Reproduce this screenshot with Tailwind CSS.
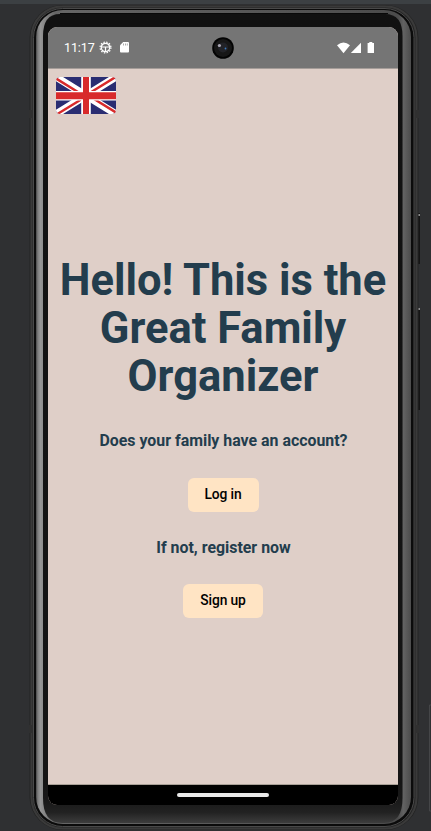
<!DOCTYPE html>
<html lang="en">
<head>
<meta charset="utf-8">
<title>Great Family Organizer</title>
<script src="https://cdn.jsdelivr.net/npm/@tailwindcss/browser@4"></script>
</head>
<body class="relative h-[831px] w-[431px] overflow-hidden bg-[#2f3032] font-['Roboto',sans-serif]">
  <!-- Device frame -->
  <svg class="absolute inset-0" width="431" height="831" viewBox="0 0 431 831" fill="none" aria-hidden="true">
    <defs>
      <linearGradient id="bezel" x1="0" y1="0" x2="0" y2="1"><stop offset="0" stop-color="#111"/><stop offset=".95" stop-color="#151515"/><stop offset=".972" stop-color="#191919"/><stop offset=".987" stop-color="#222"/><stop offset="1" stop-color="#3d3d3d"/></linearGradient>
      <linearGradient id="rim" x1="0" y1="0" x2="1" y2="0"><stop offset="0" stop-color="#484848"/><stop offset=".005" stop-color="#7d7d7d"/><stop offset=".012" stop-color="#969696"/><stop offset=".018" stop-color="#8d8d8d"/><stop offset=".05" stop-color="#666"/><stop offset=".965" stop-color="#4b4b4b"/><stop offset=".98" stop-color="#626262"/><stop offset="1" stop-color="#4c4c4c"/></linearGradient>
    </defs>
    <path d="M0 0H431V4H0z" fill="#3c4043"/>
    <path d="M431 705H429.5V811H431" stroke="#454648"/>
    <path d="M417 213h3v51h-3zM417 308h3v102h-3z" fill="#141414"/>
    <path d="M418 214h2v2h-2zM418 308h2v2h-2z" fill="#8a8a8a"/>
    <rect x="29.500" y="5" width="389" height="825" rx="33" fill="#242424"/>
    <rect x="31.500" y="6.500" width="385" height="822" rx="31" stroke="#3a3a3a" stroke-width="2"/>
    <rect x="33.500" y="8.500" width="380.500" height="818" rx="29" fill="#0b0b0b" stroke="#494949"/>
    <rect x="36" y="10" width="375" height="814" rx="27" fill="url(#rim)"/>
    <path d="M60 13.500H388" stroke="#090909"/>
    <path d="M43 36Q43 14 60 14H385Q402.500 14 402.500 36V798Q402.500 823 384 823H62Q43 823 43 798z" fill="url(#bezel)"/>
    <path d="M29 110h3v8h-3M29 725h3v8h-3M415 110h4v8h-4M415 725h4v8h-4" fill="#303030"/>
  </svg>

  <div class="relative ml-12 pt-[27px]">
    <div class="flex h-[778px] w-[350px] flex-col overflow-hidden rounded-[9px] bg-[#dfcfc8]">
      <header class="relative flex h-[42px] shrink-0 items-center border-b border-[#a59d99] bg-[#757575] px-4 text-white">
        <span class="w-[32px] pt-px text-[12.500px] leading-none tracking-[-0.1px] whitespace-nowrap">11:17</span>
        <svg class="ml-[3px]" width="13" height="13" viewBox="0 0 13 13" fill="none" stroke="#fff"><circle cx="6.500" cy="6.500" r="5.400" stroke-width="1.300" stroke-dasharray="1.500 1.330"/><circle cx="6.500" cy="6.500" r="4.200" stroke-width="1.200"/><path d="M2.500 6H10.500M6.500 6V11" stroke-width="1.200"/></svg>
        <svg class="ml-[8px]" width="9" height="11" viewBox="0 0 9 11"><path d="M3.200 0H8Q9 0 9 1V9.500Q9 10.500 8 10.500H1Q0 10.500 0 9.500V3.200z" fill="#fff"/><path d="M3.500 1.500v2M5.500 1.500v2M7.300 1.500v2" stroke="#757575" stroke-width=".6"/></svg>
        <svg class="absolute left-[164px] top-[10px]" width="22" height="22" viewBox="0 0 22 22"><circle cx="11" cy="11" r="10.800" fill="#030303"/><circle cx="11" cy="11" r="9" fill="#171717"/><circle cx="11" cy="10.500" r="5" fill="#222328"/><circle cx="7.400" cy="8.500" r="1.600" fill="#aaa7b5"/><circle cx="13.500" cy="11.500" r=".9" fill="#3978bc"/></svg>
        <svg class="mr-[7px] ml-auto" width="38" height="12" viewBox="0 0 38 12" fill="#fff"><path d="M0 3.200Q6.500-2.200 13 3.200L6.500 11.200z"/><path d="M24 .8V11H13.800z"/><path d="M32.300 0h3v1H37v10h-6.400V1h1.700z"/></svg>
      </header>

      <main class="flex grow flex-col items-center text-[#233d4d]">
        <svg class="mt-2 ml-2 self-start overflow-hidden rounded-[4px]" width="60" height="37" viewBox="0 0 60 37" aria-label="English">
          <clipPath id="flag"><rect width="60" height="37" rx="3.500"/></clipPath>
          <g clip-path="url(#flag)">
            <path d="M0 0H60V37H0z" fill="#2a2d72"/>
            <path d="M0 0L60 37M60 0L0 37" stroke="#fff" stroke-width="7.400"/>
            <path d="M-1 .9L30 20M61-.9L30 18.200M61 36.100L30 17M-1 38.500L30 19.400" stroke="#d82a2b" stroke-width="2.400"/>
            <path d="M30 0V37M0 18.800H60" stroke="#fff" stroke-width="9.600"/>
            <path d="M30 0V37" stroke="#d82a2b" stroke-width="6"/><path d="M0 18.800H60" stroke="#d82a2b" stroke-width="7"/>
          </g>
        </svg>
        <h1 class="mt-[143px] text-center text-[43.500px] leading-[48px] font-bold whitespace-nowrap">Hello! This is the<br>Great Family<br>Organizer</h1>
        <p class="mt-[30px] ml-[1px] text-[15.900px] leading-5 font-bold whitespace-nowrap">Does your family have an account?</p>
        <button class="mt-[27px] h-[34px] w-[71px] rounded-[6px] bg-[#ffe4c4] pb-[2px] text-[13.800px] font-medium tracking-[-0.1px] text-black">Log in</button>
        <p class="mt-[26px] ml-[1px] text-[15.900px] leading-5 font-bold">If not, register now</p>
        <button class="mt-[26px] h-[34px] w-[80px] rounded-[6px] bg-[#ffe4c4] pb-[2px] text-[13.800px] font-medium tracking-[-0.1px] text-black">Sign up</button>
      </main>

      <nav class="flex h-[21px] shrink-0 justify-center border-t border-[#a9a097] bg-black pt-[8px]">
        <div class="h-[4px] w-[92px] rounded-full bg-[#e9e9e9]"></div>
      </nav>
    </div>
  </div>
</body>
</html>
